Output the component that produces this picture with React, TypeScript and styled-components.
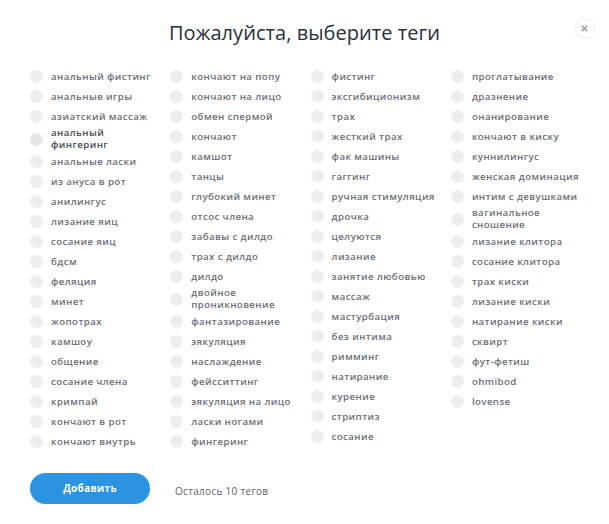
import React from "react";
import styled, { createGlobalStyle } from "styled-components";

const columns: string[][] = [
  ["анальный фистинг", "анальные игры", "азиатский массаж", "анальный фингеринг", "анальные ласки", "из ануса в рот", "анилингус", "лизание яиц", "сосание яиц", "бдсм", "феляция", "минет", "жопотрах", "камшоу", "общение", "сосание члена", "кримпай", "кончают в рот", "кончают внутрь"],
  ["кончают на попу", "кончают на лицо", "обмен спермой", "кончают", "камшот", "танцы", "глубокий минет", "отсос члена", "забавы с дилдо", "трах с дилдо", "дилдо", "двойное проникновение", "фантазирование", "эякуляция", "наслаждение", "фейсситтинг", "эякуляция на лицо", "ласки ногами", "фингеринг"],
  ["фистинг", "эксгибиционизм", "трах", "жесткий трах", "фак машины", "гаггинг", "ручная стимуляция", "дрочка", "целуются", "лизание", "занятие любовью", "массаж", "мастурбация", "без интима", "римминг", "натирание", "курение", "стриптиз", "сосание"],
  ["проглатывание", "дразнение", "онанирование", "кончают в киску", "куннилингус", "женская доминация", "интим с девушками", "вагинальное сношение", "лизание клитора", "сосание клитора", "трах киски", "лизание киски", "натирание киски", "сквирт", "фут-фетиш", "ohmibod", "lovense"],
];

const App: React.FC = () => {
  return (
    <Modal>
      <GlobalStyle />
      <CloseButton aria-label="Закрыть">
        <svg width="7" height="7" viewBox="0 0 7 7">
          <path d="M0.8 0.8L6.2 6.2M6.2 0.8L0.8 6.2" stroke="#9a9da3" strokeWidth="1.5" />
        </svg>
      </CloseButton>
      <Title>Пожалуйста, выберите теги</Title>
      <Columns>
        {columns.map((col, i) => (
          <Column key={i}>
            {col.map((tag) => (
              <Tag key={tag} $active={tag === "анальный фингеринг"}>
                <Dot $active={tag === "анальный фингеринг"} />
                <Label>{tag}</Label>
              </Tag>
            ))}
          </Column>
        ))}
      </Columns>
      <Footer>
        <AddButton>Добавить</AddButton>
        <Remaining>Осталось 10 тегов</Remaining>
      </Footer>
    </Modal>
  );
};
export default App;

const GlobalStyle = createGlobalStyle`
  html, body {
    margin: 0;
    background: #fff;
  }
  body {
    font-family: "Open Sans", "Liberation Sans", sans-serif;
  }
`;

const Modal = styled.div`
  position: relative;
  width: 609px;
  height: 524px;
  box-sizing: border-box;
  padding: 19px 0 0 30px;
  overflow: hidden;
`;

const CloseButton = styled.button`
  position: absolute;
  top: 18px;
  left: 574px;
  width: 21px;
  height: 21px;
  padding: 0;
  display: flex;
  align-items: center;
  justify-content: center;
  background: #fff;
  border: 1px solid #ececee;
  border-radius: 50%;
`;

const Title = styled.h1`
  margin: 0 0 21px -30px;
  width: 609px;
  text-align: center;
  font-size: 20px;
  line-height: 27px;
  font-weight: 400;
  letter-spacing: 0.05px;
  color: #2a303a;
`;

const Columns = styled.div`
  display: flex;
  height: 387px;
`;

const Column = styled.div`
  width: 140.3px;
  display: flex;
  flex-direction: column;
`;

const Tag = styled.div<{ $active?: boolean }>`
  display: flex;
  align-items: center;
  min-height: 19px;
  margin-bottom: 1px;
  color: ${(p) => (p.$active ? "#4b4d55" : "#6d6e75")};
`;

const Dot = styled.span<{ $active?: boolean }>`
  flex: none;
  width: 13px;
  height: 13px;
  margin-right: 8px;
  border-radius: 50%;
  background: ${(p) => (p.$active ? "#e6e6e8" : "#eeeeef")};
`;

const Label = styled.span`
  max-width: 110px;
  font-size: 9.7px;
  line-height: 12px;
  font-weight: 600;
  letter-spacing: 0.4px;
`;

const Footer = styled.div`
  display: flex;
  align-items: center;
  margin-top: 19px;
`;

const AddButton = styled.button`
  width: 120px;
  height: 31px;
  padding: 0 0 2px;
  border: 0;
  border-radius: 16px;
  background: #2a93e2;
  color: #fff;
  font-family: inherit;
  font-size: 10px;
  font-weight: 700;
  letter-spacing: 0.3px;
`;

const Remaining = styled.span`
  margin: 4px 0 0 25px;
  font-size: 10px;
  font-weight: 400;
  letter-spacing: 0.3px;
  color: #5f6168;
`;
